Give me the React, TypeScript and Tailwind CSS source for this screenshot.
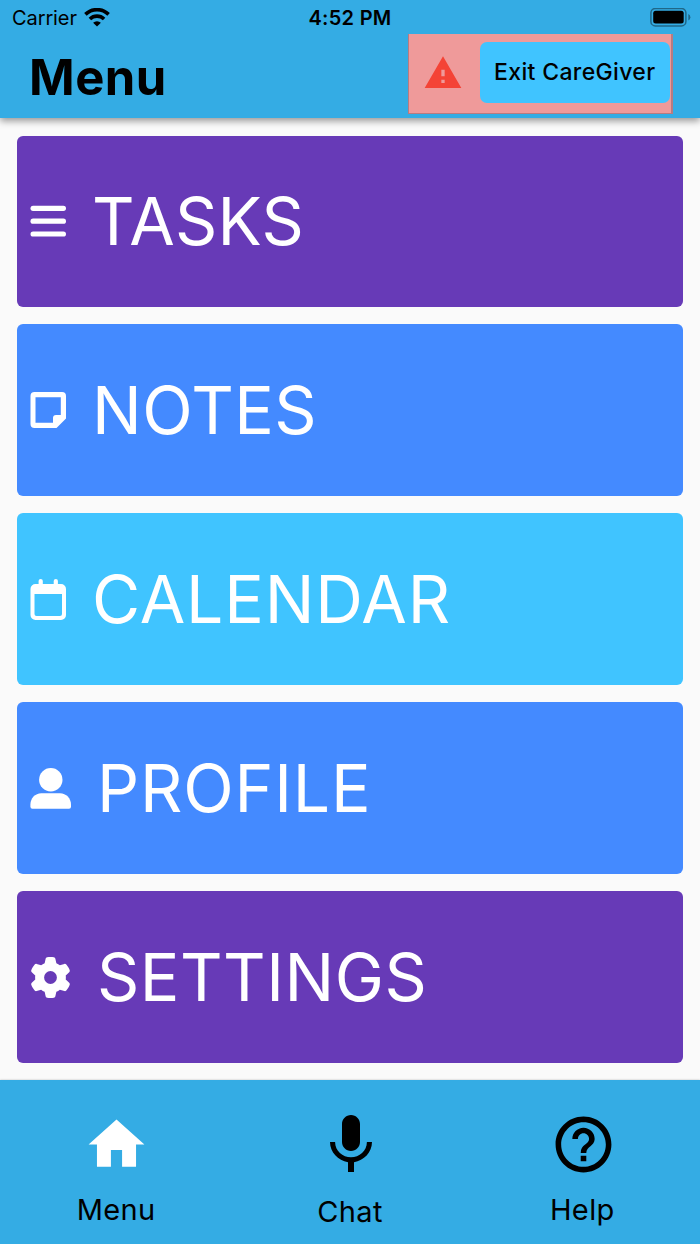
import type { ReactNode } from 'react'
import { FaGear } from 'react-icons/fa6'

const TasksIcon = () => (
  <svg width="36" height="36" viewBox="0 0 36 36" fill="currentColor">
    <rect x="0.5" y="2.7" width="35.5" height="5.2" rx="2.6" />
    <rect x="0.5" y="15.6" width="35.5" height="5.2" rx="2.6" />
    <rect x="0.5" y="28.4" width="35.5" height="5.2" rx="2.6" />
  </svg>
)

const NotesIcon = () => (
  <svg width="36" height="36" viewBox="0 0 36 36" fill="currentColor">
    <path
      fillRule="evenodd"
      d="M4.500 0h27.500a4 4 0 0 1 4 4v22.500L26.500 36h-22a4 4 0 0 1-4-4V4a4 4 0 0 1 4-4zM5.500 5.200v25.600h17.500V26a3 3 0 0 1 3-3h4.800V5.200z"
    />
  </svg>
)

const CalendarIcon = () => (
  <svg width="36" height="41" viewBox="0 0 36 41" fill="currentColor">
    <rect x="8.6" y="0" width="4.2" height="9" rx="2.1" />
    <rect x="23.7" y="0" width="4.2" height="9" rx="2.1" />
    <path
      fillRule="evenodd"
      d="M5.500 5h25.500a5 5 0 0 1 5 5v26a5 5 0 0 1-5 5H5.500a5 5 0 0 1-5-5V10a5 5 0 0 1 5-5zM4.500 15v20a2 2 0 0 0 2 2h23.500a2 2 0 0 0 2-2V15z"
    />
  </svg>
)

const ProfileIcon = () => (
  <svg width="41" height="41" viewBox="0 0 41 41" fill="currentColor">
    <circle cx="20.8" cy="11.7" r="11.7" />
    <path d="M11.300 25.200h18.700c6.200 0 11 5 11 11.300v2.300a2 2 0 0 1-2 2H2.400a2 2 0 0 1-2-2v-2.300c0-6.300 4.700-11.300 10.900-11.300z" />
  </svg>
)

const menuItems: { label: string; color: string; icon: ReactNode; text: string }[] = [
  { label: 'TASKS', color: 'bg-[#673ab7]', icon: <TasksIcon />, text: 'tracking-[0.2px]' },
  { label: 'NOTES', color: 'bg-[#448aff]', icon: <NotesIcon />, text: 'tracking-[0.45px]' },
  { label: 'CALENDAR', color: 'bg-[#40c4ff]', icon: <CalendarIcon />, text: 'tracking-[0.8px]' },
  { label: 'PROFILE', color: 'bg-[#448aff]', icon: <ProfileIcon />, text: 'tracking-[0.8px]' },
  { label: 'SETTINGS', color: 'bg-[#673ab7]', icon: <FaGear size={41} />, text: 'tracking-[0.5px]' },
]

function StatusBar() {
  return (
    <div className="grid grid-cols-3 items-center h-[34px] pt-px pl-3 pr-[9px] text-[20px]">
      <div className="flex items-center gap-[7px]">
        <span className="tracking-[-0.1px]">Carrier</span>
        <svg width="26" height="19" viewBox="0 0 26 19" fill="none" stroke="currentColor" strokeWidth="3.6">
          <path d="M1.400 6.400a16.500 16.500 0 0 1 23.200 0" />
          <path d="M5.900 11a10.300 10.300 0 0 1 14.200 0" />
          <path d="M13 18.400l-3.900-3.600a5.500 5.500 0 0 1 7.800 0z" fill="currentColor" stroke="none" />
        </svg>
      </div>
      <span className="pr-[3px] text-center font-semibold tracking-[0.3px]">4:52 PM</span>
      <svg className="justify-self-end" width="42" height="19" viewBox="0 0 42 19">
        <rect x="1.9" y="0.5" width="35" height="17.400" rx="4.500" fill="none" stroke="#1f6788" strokeWidth="1.500" />
        <rect x="4.2" y="2.800" width="30.500" height="12.800" rx="2.500" />
        <path d="M39.300 6a3.500 3.500 0 0 1 0 6.400z" fill="#1f6788" />
      </svg>
    </div>
  )
}

function Header() {
  return (
    <header className="relative h-[118px] shrink-0 bg-[#34ace4] shadow-[0_3px_7px_rgba(0,0,0,0.4)]">
      <StatusBar />
      <div className="flex justify-between pl-[29px] pr-[27px]">
        <h1 className="text-[49px] leading-[88px] h-[80px] font-bold tracking-[0.5px]">Menu</h1>
        <div className="flex w-[265px] h-[80px] pl-[13.500px] pt-[7.500px] bg-[#ef9a9a] border-l border-r-2 border-b border-[#b87b80]">
          <svg className="mt-[11px]" width="40" height="40" viewBox="0 0 24 24" fill="#f44336">
            <path d="M1 21h22L12 2 1 21zm12-3h-2v-2h2v2zm0-4h-2v-4h2v4z" />
          </svg>
          <button className="ml-[17.500px] w-[189.500px] h-[61px] shrink-0 rounded-[7px] bg-[#40c4ff] text-[23px] font-medium tracking-[0.35px] whitespace-nowrap">
            Exit CareGiver
          </button>
        </div>
      </div>
    </header>
  )
}

const navItems = [
  {
    label: 'Menu',
    size: 67,
    icon: 'text-white',
    offset: 'pt-[31px]',
    text: 'mt-[14px] mr-px',
    path: 'M10 20v-6h4v6h5v-8h3L12 3 2 12h3v8z',
  },
  {
    label: 'Chat',
    size: 72,
    icon: 'text-black ml-[2px]',
    offset: 'pt-[29px]',
    text: 'mt-[13px]',
    path: 'M12 14c1.660 0 3-1.340 3-3V5c0-1.660-1.340-3-3-3S9 3.340 9 5v6c0 1.660 1.340 3 3 3zm5.300-3c0 3-2.540 5.100-5.300 5.100S6.700 14 6.700 11H5c0 3.410 2.720 6.230 6 6.720V21h2v-3.280c3.280-.48 6-3.300 6-6.720h-1.700z',
  },
  {
    label: 'Help',
    size: 67,
    icon: 'text-black',
    offset: 'pt-[31px]',
    text: 'mt-[14px] mr-[2px]',
    path: 'M11 18h2v-2h-2v2zm1-16C6.480 2 2 6.480 2 12s4.480 10 10 10 10-4.480 10-10S17.520 2 12 2zm0 18c-4.410 0-8-3.590-8-8s3.590-8 8-8 8 3.590 8 8-3.590 8-8 8zm0-14c-2.210 0-4 1.790-4 4h2c0-1.100.9-2 2-2s2 .9 2 2c0 2-3 1.750-3 5h2c0-2.250 3-2.500 3-5 0-2.210-1.790-4-4-4z',
  },
]

function BottomNav() {
  return (
    <nav className="grid grid-cols-3 h-[164px] shrink-0 bg-[#34ace4] shadow-[0_0_2px_rgba(0,0,0,0.25)]">
      {navItems.map((item) => (
        <a key={item.label} className={`flex flex-col items-center ${item.offset}`}>
          <svg className={item.icon} width={item.size} height={item.size} viewBox="0 0 24 24" fill="currentColor">
            <path d={item.path} />
          </svg>
          <span className={`text-[29px] leading-[36px] tracking-[0.4px] ${item.text}`}>{item.label}</span>
        </a>
      ))}
    </nav>
  )
}

export default function App() {
  return (
    <div className="flex flex-col w-[700px] h-[1244px] overflow-hidden bg-[#fafafa] text-black font-['Inter',sans-serif]">
      <Header />
      <main className="flex flex-1 flex-col gap-[17px] px-[17px] pt-[17.500px] pb-[17px]">
        {menuItems.map((item) => (
          <button
            key={item.label}
            className={`flex flex-1 items-center rounded-[6px] pl-[13px] text-white ${item.color}`}
          >
            <span className="shrink-0">{item.icon}</span>
            <span className={`ml-[26px] text-[66px] leading-none font-normal ${item.text}`}>{item.label}</span>
          </button>
        ))}
      </main>
      <BottomNav />
    </div>
  )
}
